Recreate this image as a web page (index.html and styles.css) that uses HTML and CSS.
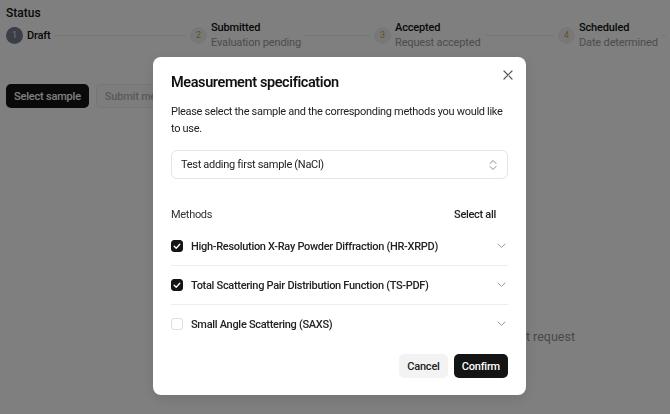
FILE: index.html
```
<!DOCTYPE html>
<html lang="en">
<head>
    <meta charset="UTF-8">
    <meta name="viewport" content="width=device-width, initial-scale=1.0">
    <title>Measurement request</title>
    <link rel="stylesheet" href="styles.css">
</head>
<body>

    <div class="page">
        <div class="status-label">Status</div>
        <div class="stepper">
            <div class="step">
                <span class="step-circle active">1</span>
                <div class="step-text">
                    <div class="step-title">Draft</div>
                </div>
                <span class="step-line"></span>
            </div>
            <div class="step">
                <span class="step-circle">2</span>
                <div class="step-text">
                    <div class="step-title">Submitted</div>
                    <div class="step-sub">Evaluation pending</div>
                </div>
                <span class="step-line"></span>
            </div>
            <div class="step">
                <span class="step-circle">3</span>
                <div class="step-text">
                    <div class="step-title">Accepted</div>
                    <div class="step-sub">Request accepted</div>
                </div>
                <span class="step-line"></span>
            </div>
            <div class="step">
                <span class="step-circle">4</span>
                <div class="step-text">
                    <div class="step-title">Scheduled</div>
                    <div class="step-sub">Date determined</div>
                </div>
                <span class="step-line"></span>
            </div>
        </div>

        <div class="actions">
            <button class="btn btn-dark">Select sample</button>
            <button class="btn btn-disabled">Submit measurement request</button>
        </div>

        <div class="empty">Add a sample to submit request</div>
    </div>

    <div class="overlay">
        <div class="modal">
            <div class="modal-header">
                <h2>Measurement specification</h2>
                <button class="close" aria-label="Close">
                    <svg width="10" height="10" viewBox="0 0 10 10"><path d="M1 1 L9 9 M9 1 L1 9" stroke="#555" stroke-width="1.2" fill="none" stroke-linecap="round"/></svg>
                </button>
            </div>
            <p class="desc">Please select the sample and the corresponding methods you would like to use.</p>

            <div class="select">
                <span>Test adding first sample (NaCl)</span>
                <svg width="8" height="12" viewBox="0 0 8 12"><path d="M1 4.5 L4 1.5 L7 4.5 M1 7.5 L4 10.5 L7 7.5" stroke="#8a8a8a" stroke-width="1" fill="none" stroke-linecap="round" stroke-linejoin="round"/></svg>
            </div>

            <div class="methods-head">
                <span class="methods-label">Methods</span>
                <button class="select-all">Select all</button>
            </div>

            <div class="method-list">
                <div class="method">
                    <span class="checkbox checked">
                        <svg width="12" height="12" viewBox="0 0 12 12"><path d="M3.2 6.2 L5.2 8.2 L8.8 4.2" stroke="#fff" stroke-width="1.3" fill="none" stroke-linecap="round" stroke-linejoin="round"/></svg>
                    </span>
                    <span class="method-name">High-Resolution X-Ray Powder Diffraction (HR-XRPD)</span>
                    <svg class="chevron" width="9" height="6" viewBox="0 0 9 6"><path d="M1 1 L4.5 4.5 L8 1" stroke="#9a9a9a" stroke-width="1" fill="none" stroke-linecap="round" stroke-linejoin="round"/></svg>
                </div>
                <div class="method">
                    <span class="checkbox checked">
                        <svg width="12" height="12" viewBox="0 0 12 12"><path d="M3.2 6.2 L5.2 8.2 L8.8 4.2" stroke="#fff" stroke-width="1.3" fill="none" stroke-linecap="round" stroke-linejoin="round"/></svg>
                    </span>
                    <span class="method-name">Total Scattering Pair Distribution Function (TS-PDF)</span>
                    <svg class="chevron" width="9" height="6" viewBox="0 0 9 6"><path d="M1 1 L4.5 4.5 L8 1" stroke="#9a9a9a" stroke-width="1" fill="none" stroke-linecap="round" stroke-linejoin="round"/></svg>
                </div>
                <div class="method">
                    <span class="checkbox"></span>
                    <span class="method-name">Small Angle Scattering (SAXS)</span>
                    <svg class="chevron" width="9" height="6" viewBox="0 0 9 6"><path d="M1 1 L4.5 4.5 L8 1" stroke="#9a9a9a" stroke-width="1" fill="none" stroke-linecap="round" stroke-linejoin="round"/></svg>
                </div>
            </div>

            <div class="modal-footer">
                <button class="btn btn-light">Cancel</button>
                <button class="btn btn-dark">Confirm</button>
            </div>
        </div>
    </div>

</body>
</html>
```

FILE: styles.css
```
body {
    font-family: Roboto, 'Noto Sans', sans-serif;
    color: #222;
    background-color: #fff;
    margin: 0;
    overflow: hidden;
}
.page {
    padding: 6px 0 6px 6px;
}
.status-label {
    font-size: 12px;
    font-weight: 500;
    line-height: 14px;
    color: #111;
}
.stepper {
    display: grid;
    grid-template-columns: repeat(3, 184px) 1fr;
}
.step {
    display: flex;
    align-items: center;
    height: 30px;
}
.step-circle {
    width: 17px;
    height: 17px;
    border-radius: 50%;
    background-color: #f1f1f1;
    color: #c9a24a;
    font-size: 9px;
    display: flex;
    align-items: center;
    justify-content: center;
    flex-shrink: 0;
}
.step-circle.active {
    background-color: #767c8f;
    color: #e4e4e4;
}
.step-text {
    margin-left: 4px;
    font-size: 11px;
    line-height: 15px;
    letter-spacing: -0.15px;
    white-space: nowrap;
}
.step-title {
    font-weight: 500;
    color: #111;
}
.step-sub {
    color: #999;
}
.step-line {
    flex: 1;
    height: 1px;
    background-color: #eaeaea;
    margin: 0 4px;
}
.actions {
    display: flex;
    gap: 7px;
    margin-top: 34px;
}
.btn {
    font-family: inherit;
    font-size: 11px;
    font-weight: 500;
    letter-spacing: -0.2px;
    height: 24px;
    padding: 0 8px;
    border-radius: 5px;
    border: none;
    white-space: nowrap;
}
.btn-dark {
    background-color: #141414;
    color: #fff;
}
.btn-disabled {
    background-color: #fafafa;
    border: 1px solid #ececec;
    color: #b5b5b5;
}
.btn-light {
    background-color: #f3f3f3;
    color: #222;
}
.empty {
    display: flex;
    justify-content: flex-end;
    padding-right: 95px;
    margin-top: 221px;
    font-size: 12.5px;
    color: #929292;
}
.overlay {
    position: fixed;
    inset: 0;
    background-color: rgba(0, 0, 0, 0.5);
    display: flex;
    justify-content: center;
    align-items: flex-start;
    padding: 57px 0 0 9px;
}
.modal {
    width: 373px;
    box-sizing: border-box;
    background-color: #fff;
    border-radius: 8px;
    padding: 16px 18px 17px;
    box-shadow: 0 4px 15px rgba(0, 0, 0, 0.1);
    letter-spacing: -0.3px;
}
.modal-header {
    display: flex;
    justify-content: space-between;
    align-items: flex-start;
}
.modal-header h2 {
    margin: 0;
    font-size: 14.5px;
    font-weight: 600;
    line-height: 20px;
    letter-spacing: -0.4px;
    color: #111;
}
.close {
    width: 20px;
    height: 20px;
    margin: -8px -10px 0 0;
    padding: 0;
    border: none;
    background: none;
    display: flex;
    align-items: center;
    justify-content: center;
}
.desc {
    margin: 10px 0 0;
    font-size: 11px;
    line-height: 17px;
    color: #222;
}
.select {
    display: flex;
    justify-content: space-between;
    align-items: center;
    height: 27px;
    margin-top: 13px;
    padding: 0 10px 0 9px;
    border: 1px solid #e4e4e4;
    border-radius: 6px;
    font-size: 11px;
    color: #222;
}
.methods-head {
    display: flex;
    justify-content: space-between;
    align-items: center;
    margin-top: 27px;
    height: 16px;
}
.methods-label {
    font-size: 11px;
    color: #333;
}
.select-all {
    font-family: inherit;
    font-size: 11px;
    font-weight: 500;
    letter-spacing: -0.3px;
    color: #222;
    background: none;
    border: none;
    padding: 0 12px 0 0;
}
.method-list {
    margin-top: 5px;
}
.method {
    display: flex;
    align-items: center;
    height: 38px;
    border-bottom: 1px solid #ededed;
}
.method:last-child {
    border-bottom: none;
}
.checkbox {
    width: 12px;
    height: 12px;
    box-sizing: border-box;
    border: 1px solid #dedede;
    border-radius: 3px;
    display: flex;
    flex-shrink: 0;
}
.checkbox.checked {
    background-color: #141414;
    border-color: #141414;
}
.checkbox.checked svg {
    margin: -1px;
}
.method-name {
    flex: 1;
    margin-left: 8px;
    font-size: 11px;
    font-weight: 500;
    color: #222;
}
.chevron {
    margin-right: 2px;
}
.modal-footer {
    display: flex;
    justify-content: flex-end;
    gap: 6px;
    margin-top: 11px;
}
```
